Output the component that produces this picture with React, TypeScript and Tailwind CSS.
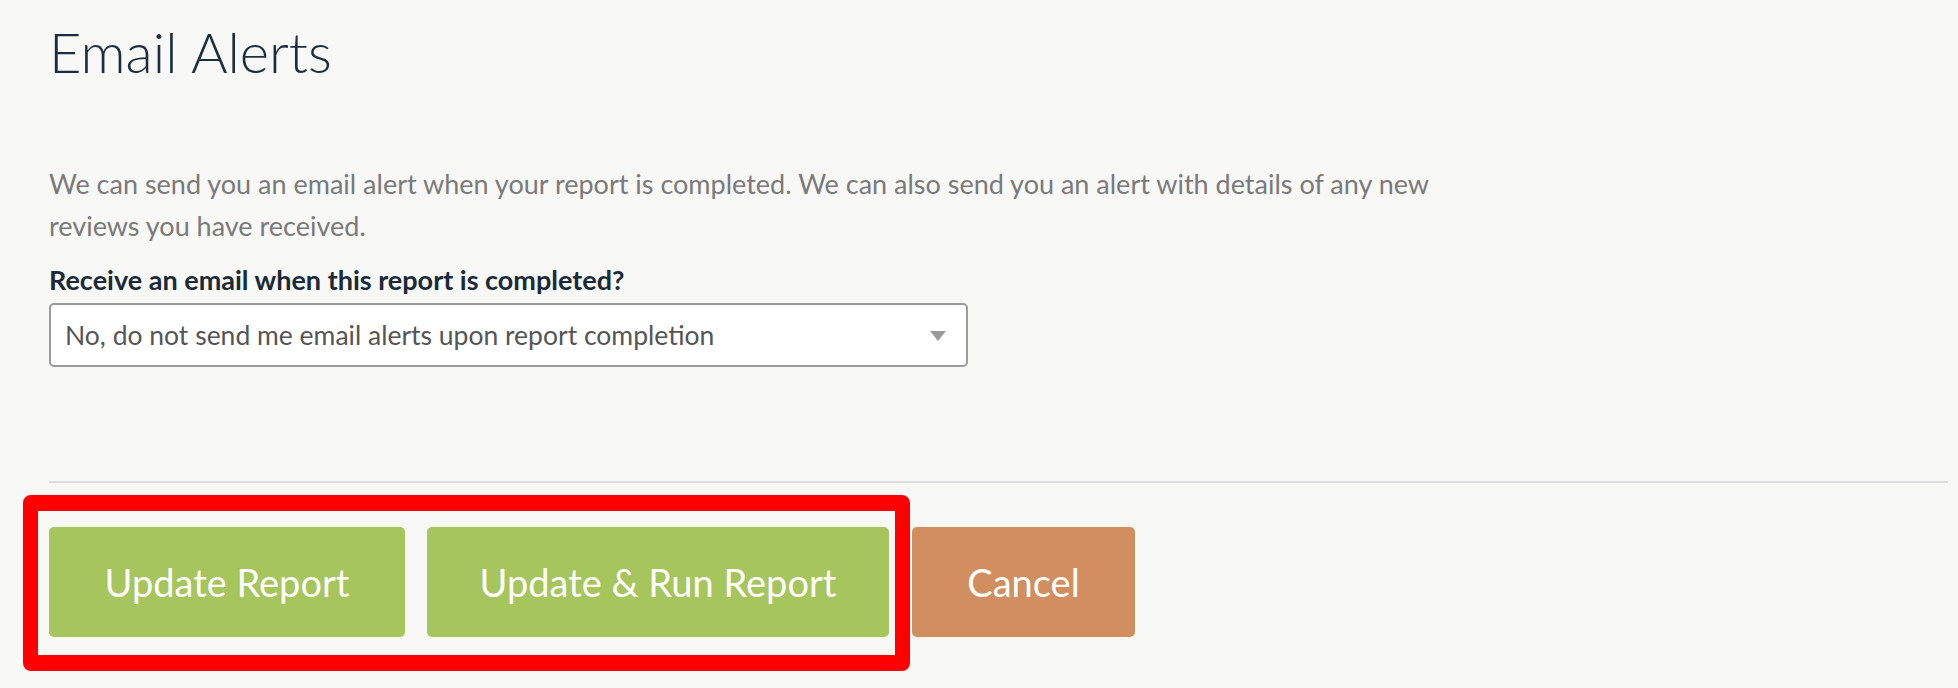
import React from "react";

export default function App() {
  return (
    <div className="min-h-[688px] w-full bg-[#f8f8f6] pl-[49px] pr-[10px] pt-[24px] font-['Lato','Liberation_Sans',sans-serif]">
      <h1 className="text-[56px] font-light leading-[56px] text-[#1e2d3d]">Email Alerts</h1>
      <p className="mt-[83px] max-w-[1440px] text-[27px] font-normal leading-[42px] text-[#7a7a7a]">
        We can send you an email alert when your report is completed. We can also send you an alert with details of any new reviews you have received.
      </p>
      <label className="mt-[18px] block text-[27px] font-bold leading-[30px] text-[#1b2a38]">
        Receive an email when this report is completed?
      </label>
      <div className="mt-[8px] flex h-[64px] w-[919px] items-center justify-between rounded-[5px] border-2 border-[#9a9a9a] bg-white pl-[14px] pr-[20px]">
        <span className="mt-[2px] text-[26.5px] text-[#555555]">No, do not send me email alerts upon report completion</span>
        <svg width="16" height="10" viewBox="0 0 16 10" className="mt-[2px]">
          <polygon points="0,0 16,0 8,10" fill="#9a9a9a" />
        </svg>
      </div>
      <div className="mt-[114px] h-[2px] w-full bg-[#dddddd]" />
      <div className="mt-[44px] flex items-stretch gap-[23px]">
        <div className="relative flex gap-[22px]">
          <div className="pointer-events-none absolute -bottom-[34px] -left-[26px] -right-[21px] -top-[32px] rounded-[8px] border-[15px] border-b-[16px] border-t-[16px] border-[#ff0000]" />
          <button className="flex h-[110px] w-[356px] items-center justify-center rounded-[5px] bg-[#a6c55c] text-[38px] text-white">
            Update Report
          </button>
          <button className="flex h-[110px] w-[462px] items-center justify-center rounded-[5px] bg-[#a6c55c] text-[38px] text-white">
            Update &amp; Run Report
          </button>
        </div>
        <button className="flex h-[110px] w-[223px] items-center justify-center rounded-[5px] bg-[#d18e5e] text-[38px] text-white">
          Cancel
        </button>
      </div>
    </div>
  );
}
